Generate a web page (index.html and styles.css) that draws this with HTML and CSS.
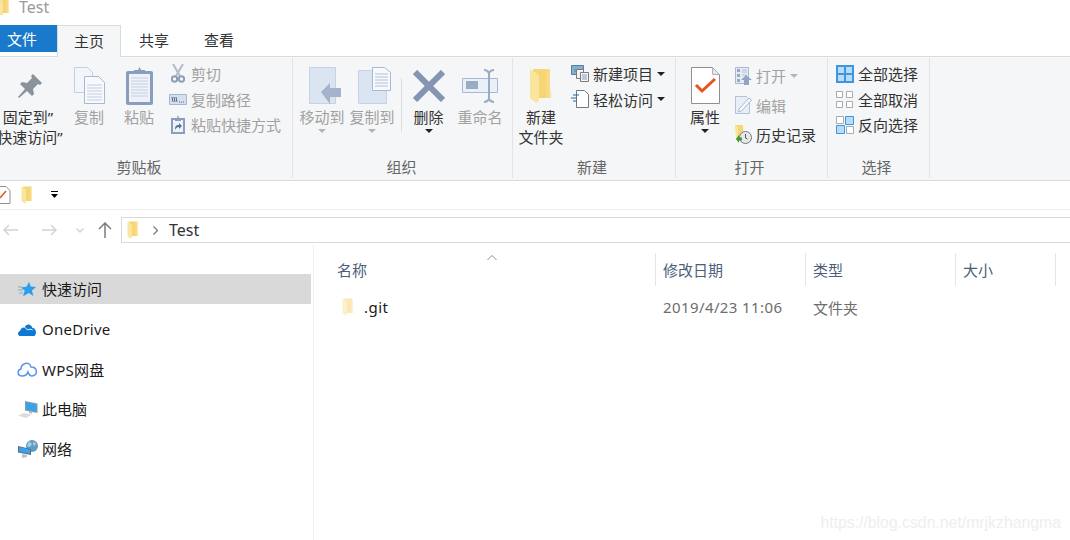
FILE: index.html
```html
<!DOCTYPE html>
<html>
  <head>
    <meta charset="utf-8">
    <link rel="stylesheet" href="styles.css">
  </head>

  <body>
    <svg class="defs" width="0" height="0">
      <symbol id="folder" viewBox="0 0 24 36">
        <path fill="#f7d574" d="M4 1h17v29H6z" />
        <path fill="#fbe29a" d="M21 1v18l2 9v2H17V1z" opacity="0.5" />
        <path fill="#fae59f" d="M1 1l9 6v26l-3 2-6-5z" />
      </symbol>
    </svg>

    <div class="window">
      <div class="title-bar">
        <svg class="title-folder" viewBox="0 0 24 36"><use href="#folder" /></svg>
        <span class="title-text">Test</span>
      </div>

      <div class="tabs">
        <div class="tab tab-file">文件</div>
        <div class="tab tab-active">主页</div>
        <div class="tab">共享</div>
        <div class="tab">查看</div>
      </div>

      <div class="ribbon">
        <div class="group group-clipboard">
          <div class="group-body">
            <div class="big-btn big-pin">
              <div class="big-icon">
                <svg width="26" height="26" viewBox="0 0 26 26"><path fill="#8a939c" d="M16 1l9 9-2 2-2-1-5 5 1 5-2 2-5-5-8 7-1-1 7-8-5-5 2-2 5 1 5-5-1-2z" /></svg>
              </div>
              <span class="pin-first">固定到”</span>
              <span>快速访问”</span>
            </div>
            <div class="big-btn disabled">
              <div class="big-icon">
                <svg width="31" height="37" viewBox="0 0 31 37">
                  <path fill="#f2f5fa" stroke="#c3cfe2" d="M.5.500h13l5 5v20H.5z" />
                  <path fill="#f7f9fc" stroke="#a9b8d2" d="M10.500 9.500h14l6 6v21h-20z" />
                  <path stroke="#c3cfe2" d="M13 18h15M13 21h15M13 24h15M13 27h15M13 30h15M13 33h15" />
                </svg>
              </div>
              <span>复制</span>
            </div>
            <div class="big-btn disabled">
              <div class="big-icon">
                <svg width="27" height="38" viewBox="0 0 27 38">
                  <path fill="#8a9dbd" d="M2 4h23a2 2 0 0 1 2 2v30a2 2 0 0 1-2 2H2a2 2 0 0 1-2-2V6a2 2 0 0 1 2-2z" />
                  <path fill="#eef2f8" d="M3 7h21v28H3z" />
                  <path stroke="#c5d0e3" d="M5 11h17M5 14h17M5 17h17M5 20h17M5 23h17M5 26h17M5 29h17" />
                  <path fill="#8a9dbd" d="M8 3h4l1.500-3 1.500 3h4v4H8z" />
                </svg>
              </div>
              <span>粘贴</span>
            </div>
            <div class="small-col">
              <div class="small-row disabled">
                <div class="small-icon">
                  <svg width="14" height="19" viewBox="0 0 14 19" fill="none" stroke="#8c9db8" stroke-width="2"><path stroke="#b4bcc7" d="M2 0l7 12M12 0L5 12" /><circle cx="3.500" cy="15" r="2.700" /><circle cx="10.500" cy="15" r="2.700" /></svg>
                </div>
                <span>剪切</span>
              </div>
              <div class="small-row disabled">
                <div class="small-icon">
                  <svg width="18" height="11" viewBox="0 0 18 11"><path fill="#d5dfee" stroke="#a7b6cf" d="M.5.500h17v10H.5z" /><path stroke="#55657f" fill="none" d="M3 3l1 5M5 3l1 5M7 3l1 5M10 8h1M12 8h1M14 8h1" /></svg>
                </div>
                <span>复制路径</span>
              </div>
              <div class="small-row disabled">
                <div class="small-icon">
                  <svg width="14" height="19" viewBox="0 0 14 19"><path fill="#8a9dbd" d="M0 3h14v16H0z" /><path fill="#eef2f8" d="M2 5h10v12H2z" /><path fill="#8a9dbd" d="M4 3h2l1-3 1 3h2v3H4z" /><path fill="#5d7195" d="M4 15c0-4 1-5 4-5V8l3 3-3 3v-2c-2 0-3 1-4 3z" /></svg>
                </div>
                <span>粘贴快捷方式</span>
              </div>
            </div>
          </div>
          <div class="group-label">剪贴板</div>
        </div>

        <div class="group group-organize">
          <div class="group-body">
            <div class="big-btn disabled">
              <div class="big-icon icon-move">
                <svg width="33" height="38" viewBox="0 0 33 38"><path fill="#dbe4f1" stroke="#c6d3e6" d="M.5.500h26v36H.5z" /><path fill="#a3b3cc" d="M12 25l9-9v5h11v9H21v7z" /></svg>
              </div>
              <span>移动到</span>
              <i class="caret caret-off"></i>
            </div>
            <div class="big-btn disabled">
              <div class="big-icon icon-copyto">
                <svg width="33" height="38" viewBox="0 0 33 38"><path fill="#dbe4f1" stroke="#c6d3e6" d="M.5 3.500h28v33H.5z" /><path fill="#f7f9fc" stroke="#a9b8d2" d="M14.500.500h12l6 5v18h-18z" /><path stroke="#b3c0d6" d="M17 7h13M17 10h13M17 13h13M17 16h13M17 19h13" /></svg>
              </div>
              <span>复制到</span>
              <i class="caret caret-off"></i>
            </div>
            <div class="vsep"></div>
            <div class="big-btn big-delete">
              <div class="big-icon">
                <svg width="32" height="32" viewBox="0 0 32 32"><path stroke="#8494b2" stroke-width="6" d="M2 2l28 28M30 2L2 30" /></svg>
              </div>
              <span>删除</span>
              <i class="caret"></i>
            </div>
            <div class="big-btn disabled">
              <div class="big-icon">
                <svg width="37" height="34" viewBox="0 0 37 34"><path fill="#eaf0f8" stroke="#a9b8d2" d="M.5 9.500h35v14H.5z" /><path fill="#9babc6" d="M4 12h12v8H4z" /><path fill="none" stroke="#9babc6" stroke-width="2" d="M22 1c3 0 4 1 5 3 1-2 2-3 5-3M27 4v26M22 33c3 0 4-1 5-3 1 2 2 3 5 3" /></svg>
              </div>
              <span>重命名</span>
            </div>
          </div>
          <div class="group-label">组织</div>
        </div>

        <div class="group group-new">
          <div class="group-body">
            <div class="big-btn">
              <div class="big-icon">
                <svg width="24" height="36" viewBox="0 0 24 36"><use href="#folder" /></svg>
              </div>
              <span>新建</span>
              <span>文件夹</span>
            </div>
            <div class="small-col">
              <div class="small-row">
                <div class="small-icon">
                  <svg width="18" height="17" viewBox="0 0 18 17"><path fill="#7fb2d8" stroke="#5c7f9c" d="M.5.500h12v9H.5z" /><path fill="#8a9a7c" d="M3 4h4v3H3z" /><path fill="#f4f4f4" stroke="#7a7a7a" d="M5.500 4.500h7v9h-7z" /><path fill="#fdf3f3" stroke="#7a7a7a" d="M9.500 7.500h8v9h-8z" /><path stroke="#7d9ecb" d="M11 10h5M11 12h5M11 14h5" /></svg>
                </div>
                <span>新建项目</span>
                <i class="caret caret-side"></i>
              </div>
              <div class="small-row">
                <div class="small-icon">
                  <svg width="18" height="18" viewBox="0 0 18 18"><path fill="#fff" stroke="#777" d="M5.500.500h8l4 4v13h-12z" /><path stroke="#1a6fb5" stroke-width="1.200" d="M2 5h6M0 8h6M2 11h4" /></svg>
                </div>
                <span>轻松访问</span>
                <i class="caret caret-side"></i>
              </div>
            </div>
          </div>
          <div class="group-label">新建</div>
        </div>

        <div class="group group-open">
          <div class="group-body">
            <div class="big-btn">
              <div class="big-icon">
                <svg width="29" height="37" viewBox="0 0 29 37"><path fill="#fff" stroke="#8f8f8f" d="M.5.500h21l7 7v29H.5z" /><path fill="#e7e7e7" stroke="#b0b0b0" d="M21.500.500v7h7z" /><path fill="none" stroke="#e8531f" stroke-width="3" d="M5 18l6 6 13-12" /></svg>
              </div>
              <span>属性</span>
              <i class="caret"></i>
            </div>
            <div class="small-col small-col-open">
              <div class="small-row disabled">
                <div class="small-icon">
                  <svg width="17" height="18" viewBox="0 0 17 18"><path fill="#e6ecf5" stroke="#a9b8d2" d="M.5.500h13v16H.5z" /><path fill="#97a8c2" d="M2 2h3v3H2zM2 7h3v3H2zM2 12h3v3H2z" /><path stroke="#b3c0d6" d="M7 3h5M7 5h5M7 8h5" /><path fill="#8ea6c8" d="M6 13l5-5 6 5h-3v5H9v-5z" /></svg>
                </div>
                <span>打开</span>
                <i class="caret caret-side caret-off"></i>
              </div>
              <div class="small-row disabled">
                <div class="small-icon">
                  <svg width="17" height="18" viewBox="0 0 17 18"><path fill="#e9eef6" stroke="#b4c1d6" d="M.5.500h11l3 3v14H.5z" /><path fill="#f7f9fc" stroke="#a9b8d2" d="M4 13l10-11 2.500 2-10 11-3 1z" /></svg>
                </div>
                <span>编辑</span>
              </div>
              <div class="small-row">
                <div class="small-icon">
                  <svg width="18" height="19" viewBox="0 0 18 19"><path fill="#f7d574" d="M1 0h8v13H3z" /><path fill="#fae59f" d="M1 0l3 2v14l-2-1z" /><circle cx="11.500" cy="12.500" r="6" fill="#e8e8e8" stroke="#777" /><path stroke="#555" d="M11.500 9v4l2 1" fill="none" /><path fill="#3a9a35" d="M2 14l3-4v2.500h3v3H5V18z" /></svg>
                </div>
                <span>历史记录</span>
              </div>
            </div>
          </div>
          <div class="group-label">打开</div>
        </div>

        <div class="group group-select">
          <div class="group-body">
            <div class="small-col">
              <div class="small-row">
                <div class="small-icon">
                  <svg width="18" height="18" viewBox="0 0 18 18"><path fill="#3d96de" d="M0 0h18v18H0z" /><path fill="#b7dcf8" d="M2 2h6v6H2zM10 2h6v6h-6zM2 10h6v6H2zM10 10h6v6h-6z" /></svg>
                </div>
                <span>全部选择</span>
              </div>
              <div class="small-row">
                <div class="small-icon">
                  <svg width="17" height="17" viewBox="0 0 17 17" fill="#fff" stroke="#ababab"><path d="M.5.500h6v6h-6zM10.500.500h6v6h-6zM.5 10.500h6v6h-6zM10.500 10.500h6v6h-6z" /></svg>
                </div>
                <span>全部取消</span>
              </div>
              <div class="small-row">
                <div class="small-icon">
                  <svg width="18" height="18" viewBox="0 0 18 18"><path fill="#fff" stroke="#ababab" d="M.5.500h7v7h-7zM10.500 10.500h7v7h-7z" /><path fill="#b7dcf8" stroke="#3d96de" d="M9.500.500h8v8h-8zM.5 9.500h8v8h-8z" /></svg>
                </div>
                <span>反向选择</span>
              </div>
            </div>
          </div>
          <div class="group-label">选择</div>
        </div>
      </div>

      <div class="qat">
        <svg class="qat-doc" width="11" height="18" viewBox="0 0 11 18"><path fill="#fff" stroke="#8f8f8f" d="M-4 .500h10l4 4v13H-4z" /><path stroke="#e8531f" stroke-width="1.500" d="M0 12l6-7" /></svg>
        <svg class="qat-folder" width="12" height="18" viewBox="0 0 24 36"><use href="#folder" /></svg>
        <svg class="qat-arrow" width="7" height="7" viewBox="0 0 7 7"><path d="M0 0h7v1H0zM0 3h7L3.500 7z" /></svg>
      </div>

      <div class="nav-bar">
        <div class="nav-buttons">
          <svg width="15" height="12" viewBox="0 0 15 12" fill="none" stroke="#d4d4d4" stroke-width="1.500"><path d="M15 6H1M6 1L1 6l5 5" /></svg>
          <svg width="15" height="12" viewBox="0 0 15 12" fill="none" stroke="#d4d4d4" stroke-width="1.500"><path d="M0 6h14M9 1l5 5-5 5" /></svg>
          <svg width="8" height="5" viewBox="0 0 8 5" fill="none" stroke="#d4d4d4" stroke-width="1.500"><path d="M.5.500L4 4 7.500.5" /></svg>
          <svg width="14" height="16" viewBox="0 0 14 16" fill="none" stroke="#7d7d7d" stroke-width="1.500"><path d="M7 16V1M1 7l6-6 6 6" /></svg>
        </div>
        <div class="address">
          <svg width="12" height="18" viewBox="0 0 24 36"><use href="#folder" /></svg>
          <svg class="crumb" width="5" height="9" viewBox="0 0 5 9" fill="none" stroke="#7d7d7d" stroke-width="1.300"><path d="M.5.500l4 4-4 4" /></svg>
          <span>Test</span>
        </div>
      </div>

      <div class="content">
        <div class="sidebar">
          <div class="side-item side-selected">
            <div class="side-icon">
              <svg width="18" height="15" viewBox="0 0 18 15"><path fill="#2b9fec" d="M11 0l1.800 4.600 5.200.4-4 3.500 1.300 5.500-4.600-3L5 14.500l1.700-6L3 5.500l5.500-.8z" /><path stroke="#8fa8bf" d="M0 5h4M0 8h5M1 11h4" /></svg>
            </div>
            <span>快速访问</span>
          </div>
          <div class="side-item">
            <div class="side-icon">
              <svg width="18" height="13" viewBox="0 0 18 13"><path fill="#0f78d4" d="M1.500 13C-.5 12-.5 8.500 2 8 3 5 5 4 6.500 4.500 8 .5 13 0 14.500 5c2 0 3.500 2 3.500 4.500 0 1.500-1 3-1.500 3.500z" /><path fill="none" stroke="#fff" d="M6.500 4.500c1.500.5 2.500 1.500 3 2.500 1.500-1 3.500-1 5 0" /></svg>
            </div>
            <span class="latin">OneDrive</span>
          </div>
          <div class="side-item">
            <div class="side-icon side-icon-wide">
              <svg width="20" height="16" viewBox="0 0 20 16" fill="none" stroke="#5b93ee" stroke-width="1.500"><path d="M5 15c-5 0-5-6-1-7 0-5 8-9 10-2 7 0 7 9 1 9-2 0-3-1-4-4-1 3-3 4-6 4z" /></svg>
            </div>
            <span class="latin">WPS网盘</span>
          </div>
          <div class="side-item">
            <div class="side-icon">
              <svg width="20" height="17" viewBox="0 0 20 17"><path fill="#8c9aa6" d="M7 0l12.500 2.500V12L7 9.500z" /><path fill="#38a3ea" d="M8 1.300l10.500 2.100v7.400L8 8.700z" /><path fill="#a9b3bc" d="M11 10l3 .5v2l-3-.5z" /><path fill="#d9dde0" d="M0 14.500l6-2.500 8 1.500-6 3.500z" /></svg>
            </div>
            <span>此电脑</span>
          </div>
          <div class="side-item">
            <div class="side-icon">
              <svg width="20" height="18" viewBox="0 0 20 18"><circle cx="14" cy="6" r="6" fill="#5f9cc4" /><path fill="#a3cfe8" d="M11 1l3 3-2 3-3-1z" /><path fill="#b9c5cf" d="M15 2l3 1-1 3-2-1z" /><path fill="#5a6e80" d="M0 6l13 3v6L0 12.500z" /><path fill="#38a3ea" d="M1 7l11 2.500v4.300L1 11.500z" /><path fill="#b9c0c6" d="M4 14l5 1v2l-5 1z" /></svg>
            </div>
            <span>网络</span>
          </div>
        </div>

        <div class="files">
          <div class="sort-caret">
            <svg width="10" height="5" viewBox="0 0 10 5" fill="none" stroke="#8a8a8a"><path d="M.5 5L5 .5 9.500 5" /></svg>
          </div>
          <div class="col-headers">
            <div class="col col-name">名称</div>
            <div class="col col-date">修改日期</div>
            <div class="col col-type">类型</div>
            <div class="col col-size">大小</div>
          </div>
          <div class="file-row">
            <div class="col-name file-name">
              <svg width="12" height="18" viewBox="0 0 24 36" class="faded"><use href="#folder" /></svg>
              <span>.git</span>
            </div>
            <div class="col-date file-meta file-date">2019/4/23 11:06</div>
            <div class="col-type file-meta">文件夹</div>
          </div>
        </div>
      </div>

      <div class="watermark">https://blog.csdn.net/mrjkzhangma</div>
    </div>
  </body>
</html>
```

FILE: styles.css
```css
* {
  box-sizing: border-box;
}

html, body {
  margin: 0;
  height: 100%;
  background-color: #fff;
}

body {
  font-family: "Noto Sans", "Noto Sans CJK SC", sans-serif;
  font-size: 15px;
  color: #1a1a1a;
  overflow: hidden;
}

svg {
  display: block;
  flex-shrink: 0;
}

.defs {
  position: absolute;
}

.window {
  position: relative;
  width: 1070px;
  height: 540px;
  overflow: hidden;
}

/* Title bar and tabs */

.title-bar {
  display: flex;
  align-items: center;
  height: 30px;
  margin-top: -5px;
  padding-left: 19px;
  padding-bottom: 6px;
}

.title-folder {
  width: 12px;
  height: 18px;
  margin-left: -21px;
  margin-right: 9px;
}

.title-text {
  color: #9a9a9a;
  font-size: 16px;
  line-height: 20px;
}

.tabs {
  display: flex;
  height: 32px;
  border-bottom: 1px solid #dadbdc;
}

.tab {
  width: 66px;
  height: 31px;
  text-align: center;
  line-height: 30px;
  color: #333;
}

.tab:last-child {
  width: 64px;
}

.tab-file {
  width: 57px;
  height: 27px;
  padding-right: 13px;
  line-height: 28px;
  background-color: #1979ca;
  color: #fff;
}

.tab-active {
  width: 64px;
  height: 32px;
  background-color: #f5f6f7;
  border: 1px solid #dadbdc;
  border-bottom: none;
}

/* Ribbon */

.ribbon {
  display: flex;
  height: 124px;
  background-color: #f5f6f7;
  border-bottom: 1px solid #dadbdc;
  padding-top: 1px;
  margin-left: -4px;
}

.group {
  display: flex;
  flex-direction: column;
  height: 120px;
  border-right: 1px solid #e1e3e6;
}

.group-clipboard {
  width: 297px;
}

.group-organize {
  width: 220px;
  padding-left: 4px;
}

.group-new {
  width: 163px;
  padding-left: 3px;
}

.group-open {
  width: 152px;
  padding-left: 4px;
}

.group-select {
  width: 102px;
  padding-left: 3px;
}

.group-body {
  display: flex;
  height: 99px;
}

.group-label {
  height: 20px;
  text-align: center;
  line-height: 20px;
  font-size: 15px;
  color: #666;
}

.group-clipboard .group-label {
  margin-left: -10px;
}

.group-organize .group-label {
  margin-left: -6px;
}

.group-new .group-label,
.group-select .group-label {
  margin-left: -7px;
}

.group-open .group-label {
  margin-left: -8px;
}

.big-btn {
  display: flex;
  flex-direction: column;
  align-items: center;
  width: 50px;
  line-height: 20px;
  color: #333;
  white-space: nowrap;
}

.big-icon {
  display: flex;
  align-items: center;
  justify-content: center;
  height: 49px;
  padding-top: 6px;
}

.icon-move {
  margin-left: 6px;
}

.icon-copyto {
  margin-left: 4px;
}

.big-pin {
  width: 68px;
}

.pin-first {
  margin-right: 4px;
}

.big-delete {
  width: 53px;
}

.big-btn.disabled,
.small-row.disabled {
  color: #a1a1a1;
}

.caret {
  width: 0;
  height: 0;
  margin-top: 2px;
  border-left: 4px solid transparent;
  border-right: 4px solid transparent;
  border-top: 4px solid #222;
}

.caret-off {
  border-top-color: #b5b5b5;
}

.caret-side {
  margin: 0 0 0 4px;
}

.vsep {
  width: 1px;
  height: 54px;
  margin: 20px 0 0 4px;
  background-color: #dcdfe3;
}

.small-col {
  display: flex;
  flex-direction: column;
  padding-top: 3px;
  margin-left: 4px;
}

.small-row {
  display: flex;
  align-items: center;
  height: 25.5px;
  white-space: nowrap;
  color: #333;
}

.small-icon {
  display: flex;
  align-items: center;
  justify-content: center;
  width: 19px;
  margin-right: 4px;
}

.small-col-open {
  margin-left: 3px;
}

.small-col-open .small-row {
  height: 29.5px;
}

.small-col-open .small-icon {
  justify-content: flex-end;
}

/* Quick access bar and address */

.qat {
  display: flex;
  align-items: center;
  height: 29px;
  border-bottom: 1px solid #f0f0f0;
  padding-bottom: 1px;
}

.qat-folder {
  margin-left: 10px;
}

.qat-arrow {
  margin-left: 18px;
}

.nav-bar {
  display: flex;
  align-items: center;
  height: 35px;
  padding-top: 5px;
}

.nav-buttons {
  display: flex;
  align-items: center;
  width: 121px;
  padding-left: 3px;
}

.nav-buttons svg:nth-child(2) {
  margin-left: 24px;
}

.nav-buttons svg:nth-child(3) {
  margin-left: 19px;
}

.nav-buttons svg:nth-child(4) {
  margin-left: 14px;
}

.address {
  display: flex;
  align-items: center;
  flex: 1;
  height: 26px;
  padding-left: 5px;
  margin-right: -1px;
  border: 1px solid #d9d9d9;
}

.crumb {
  margin-left: 14px;
  margin-right: 11px;
}

.address span {
  color: #333;
  font-size: 16px;
}

/* Sidebar and file list */

.content {
  display: flex;
  height: 295px;
}

.sidebar {
  width: 314px;
  padding-top: 29px;
  border-right: 1px solid #f0f0f0;
}

.side-item {
  display: flex;
  align-items: center;
  width: 311px;
  height: 30px;
  margin-bottom: 10px;
  padding-left: 18px;
}

.side-item span {
  padding-bottom: 2px;
}

.side-item span.latin {
  padding-bottom: 0;
  letter-spacing: 0.25px;
}

.side-icon {
  width: 24px;
}

.side-icon-wide {
  margin-left: -1px;
  width: 25px;
}

.side-selected {
  background-color: #d9d9d9;
}

.files {
  position: relative;
  flex: 1;
  padding-top: 8px;
}

.sort-caret {
  position: absolute;
  left: 173px;
  top: 10px;
}

.col-headers {
  display: flex;
  height: 33px;
  align-items: stretch;
}

.col {
  display: flex;
  align-items: center;
  padding-left: 7px;
  color: #4c607a;
  border-right: 1px solid #e5e5e5;
}

.col-name {
  width: 342px;
  padding-left: 23px;
}

.col-date,
.col-type {
  width: 150px;
  padding-left: 7px;
}

.col-size {
  width: 100px;
}

.file-row {
  display: flex;
  align-items: center;
  height: 30px;
  margin-top: 6px;
}

.file-name {
  display: flex;
  align-items: center;
  padding-left: 28px;
  gap: 10px;
  letter-spacing: 0.5px;
}

.faded {
  opacity: 0.55;
}

.file-meta {
  color: #6d6d6d;
}

.file-date {
  letter-spacing: 0.4px;
}

.watermark {
  position: absolute;
  right: 9px;
  top: 513px;
  font-family: "Liberation Sans", sans-serif;
  font-size: 15.8px;
  line-height: 20px;
  color: #eeeeee;
}
```
